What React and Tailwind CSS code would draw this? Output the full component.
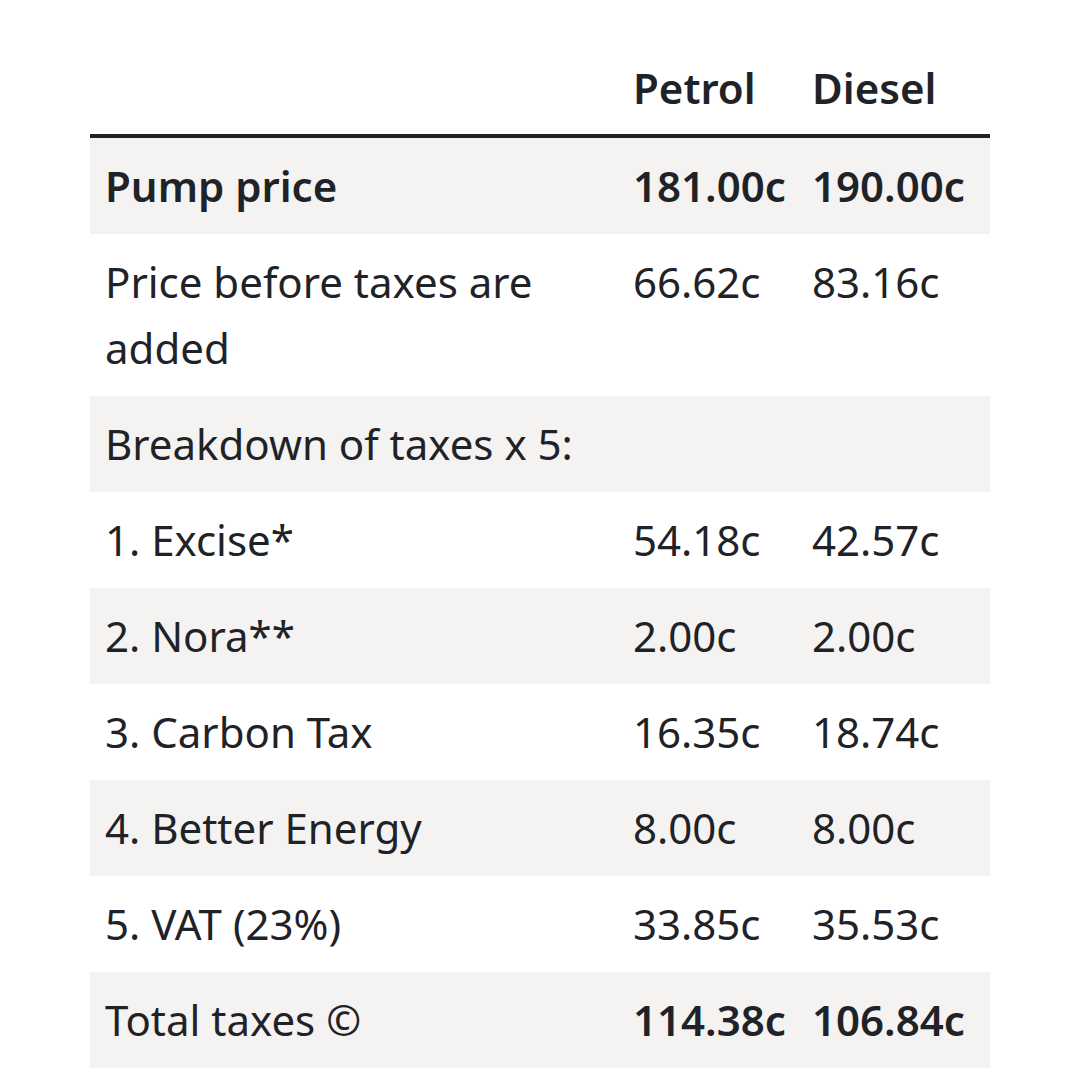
import React from 'react';

const rows = [
   { label: 'Pump price', petrol: '181.00c', diesel: '190.00c', shaded: true, bold: true, boldValues: true },
   { label: 'Price before taxes are added', petrol: '66.62c', diesel: '83.16c' },
   { label: 'Breakdown of taxes x 5:', petrol: '', diesel: '', shaded: true },
   { label: '1. Excise*', petrol: '54.18c', diesel: '42.57c' },
   { label: '2. Nora**', petrol: '2.00c', diesel: '2.00c', shaded: true },
   { label: '3. Carbon Tax', petrol: '16.35c', diesel: '18.74c' },
   { label: '4. Better Energy', petrol: '8.00c', diesel: '8.00c', shaded: true },
   { label: '5. VAT (23%)', petrol: '33.85c', diesel: '35.53c' },
   { label: 'Total taxes ©', petrol: '114.38c', diesel: '106.84c', shaded: true, boldValues: true },
];

const App = () => {
   return (
      <div className="min-h-screen bg-white pt-[40px] text-[#1f2328]" style={{ fontFamily: '"Noto Sans", sans-serif' }}>
         <table className="mx-auto w-[900px] table-fixed border-collapse text-[42px] leading-[66px]">
            <colgroup>
               <col className="w-[528px]" />
               <col className="w-[179px]" />
               <col className="w-[193px]" />
            </colgroup>
            <thead>
               <tr className="border-b-4 border-[#1f2328]">
                  <th className="px-[15px] pt-[15px] pb-[13px]"></th>
                  <th className="px-[15px] pt-[15px] pb-[13px] text-left font-semibold">Petrol</th>
                  <th className="px-[15px] pt-[15px] pb-[13px] text-left font-semibold">Diesel</th>
               </tr>
            </thead>
            <tbody>
               {rows.map((row, index) => (
                  <tr key={index} className={row.shaded ? 'bg-[#f4f3f1]' : 'bg-white'}>
                     <td className={`px-[15px] py-[15px] align-top ${row.bold ? 'font-semibold' : 'font-normal'}`}>{row.label}</td>
                     <td className={`px-[15px] py-[15px] align-top whitespace-nowrap ${row.boldValues ? 'font-semibold' : 'font-normal'}`}>{row.petrol}</td>
                     <td className={`px-[15px] py-[15px] align-top whitespace-nowrap ${row.boldValues ? 'font-semibold' : 'font-normal'}`}>{row.diesel}</td>
                  </tr>
               ))}
            </tbody>
         </table>
      </div>
   );
};

export default App;
